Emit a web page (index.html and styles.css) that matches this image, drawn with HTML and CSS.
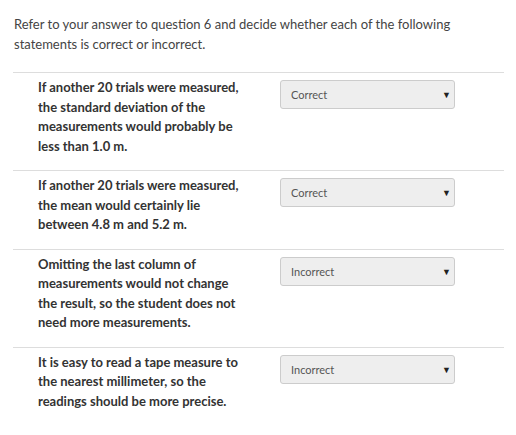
FILE: index.html
```html
<!DOCTYPE html>
<html lang="en">
<head>
    <meta charset="UTF-8">
    <title>Question 7</title>
    <link rel="stylesheet" href="styles.css">
</head>
<body>
    <div class="question">
        <p class="question-text">Refer to your answer to question 6 and decide whether each of the following statements is correct or incorrect.</p>
        <div class="answers">
            <div class="answer-row">
                <div class="statement">If another 20 trials were measured, the standard deviation of the measurements would probably be less than 1.0 m.</div>
                <div class="choice"><span>Correct</span><span class="arrow">&#9660;</span></div>
            </div>
            <div class="answer-row">
                <div class="statement">If another 20 trials were measured, the mean would certainly lie between 4.8 m and 5.2 m.</div>
                <div class="choice"><span>Correct</span><span class="arrow">&#9660;</span></div>
            </div>
            <div class="answer-row">
                <div class="statement">Omitting the last column of measurements would not change the result, so the student does not need more measurements.</div>
                <div class="choice"><span>Incorrect</span><span class="arrow">&#9660;</span></div>
            </div>
            <div class="answer-row">
                <div class="statement">It is easy to read a tape measure to the nearest millimeter, so the readings should be more precise.</div>
                <div class="choice"><span>Incorrect</span><span class="arrow">&#9660;</span></div>
            </div>
        </div>
    </div>
</body>
</html>
```

FILE: styles.css
```css
body {
    margin: 0;
    padding: 0;
    font-family: Lato, "Liberation Sans", sans-serif;
    background-color: #fff;
    color: #2d3b45;
}
.question {
    padding: 14px 12px 0 13px;
}
.question-text {
    margin: 0 0 18px 1px;
    font-size: 13px;
    line-height: 20px;
    color: #444;
}
.answer-row {
    display: flex;
    align-items: flex-start;
    border-top: 1px solid #ddd;
    padding: 5px 0 14px 25px;
}
.statement {
    width: 206px;
    font-size: 13px;
    font-weight: bold;
    line-height: 19.5px;
    color: #333;
}
.choice {
    margin: 2px 0 0 36px;
    width: 175px;
    height: 29px;
    box-sizing: border-box;
    display: flex;
    align-items: center;
    justify-content: space-between;
    padding: 0 3px 0 10px;
    background-color: #eee;
    border: 1px solid #ccc;
    border-radius: 3px;
    font-size: 11px;
    color: #555;
}
.arrow {
    font-size: 9px;
    color: #222;
}
```
